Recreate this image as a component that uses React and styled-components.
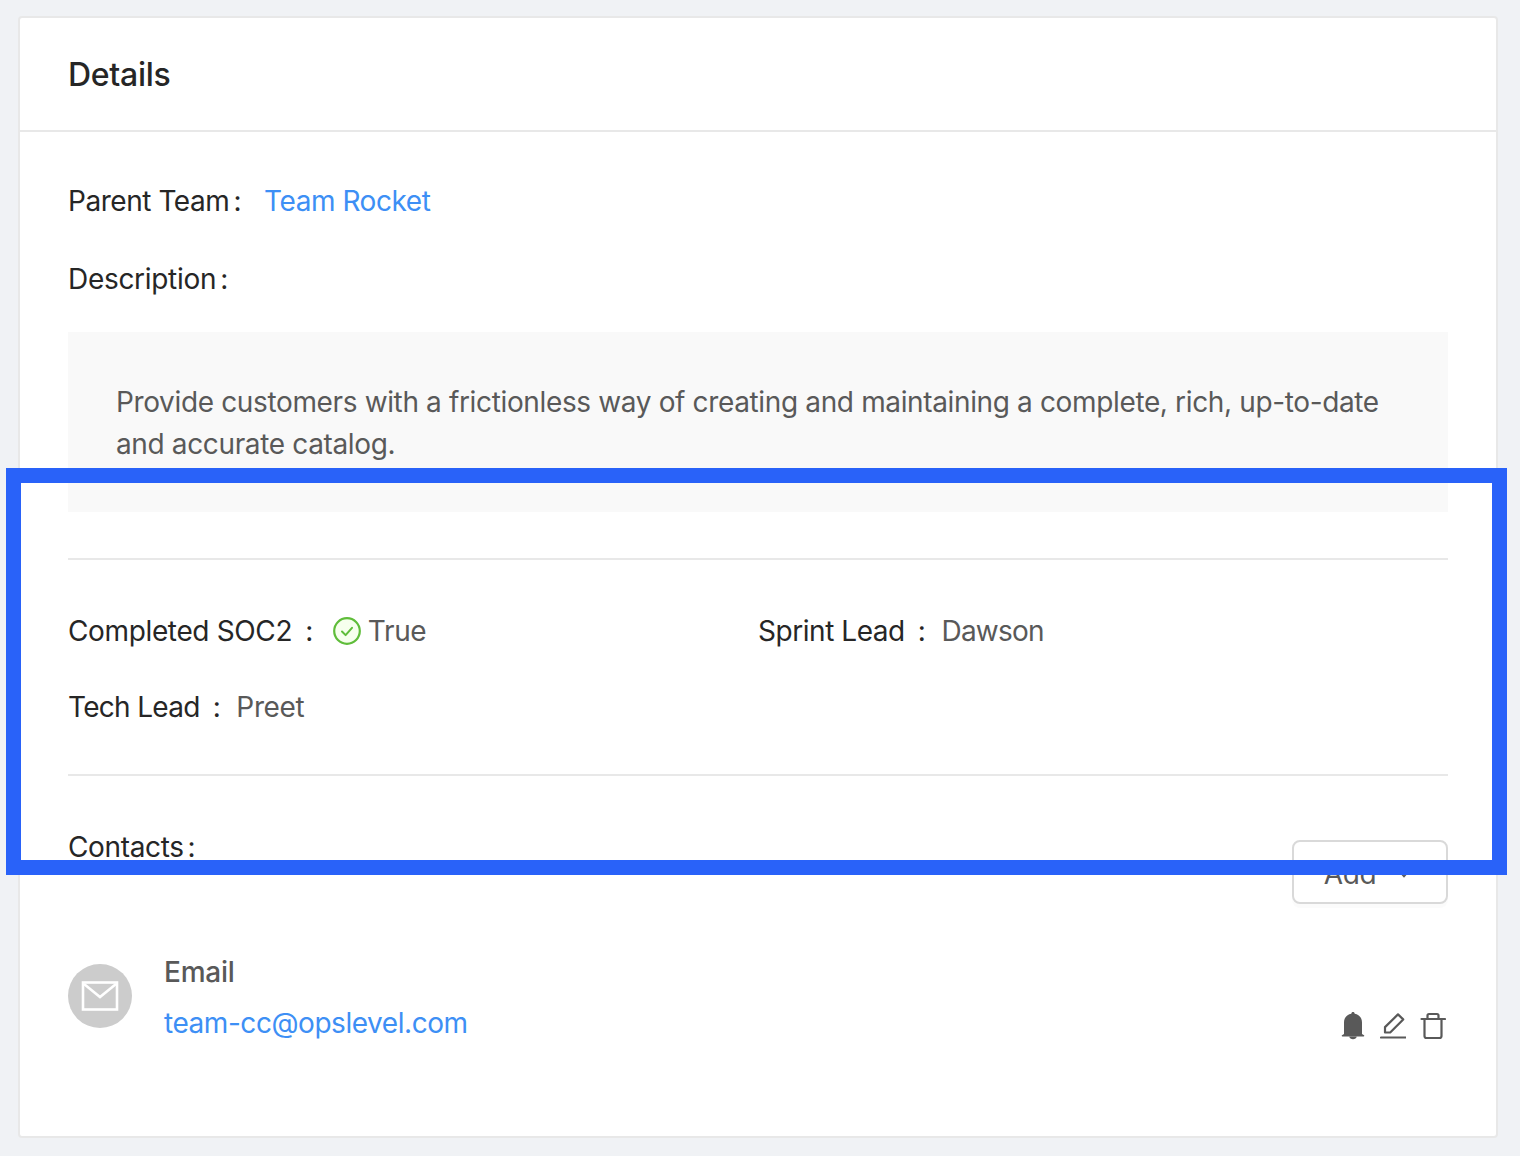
import React from "react";
import styled, { createGlobalStyle } from "styled-components";

const Global = createGlobalStyle`
  html, body { margin: 0; padding: 0; background: #f0f2f5; }
  * { box-sizing: border-box; }
`;

const Page = styled.div`
  position: relative;
  width: 1520px;
  height: 1156px;
  padding: 16px 22px 18px 18px;
  background: #f0f2f5;
  overflow: hidden;
  font-family: Inter, "Liberation Sans", sans-serif;
  font-size: 28px;
  line-height: 44px;
  letter-spacing: -0.36px;
  color: #262626;
`;

const Card = styled.section`
  height: 1122px;
  background: #fff;
  border: 2px solid #e8e8e8;
  border-radius: 4px;
`;

const CardHead = styled.header`
  height: 114px;
  padding: 2px 48px 0;
  display: flex;
  align-items: center;
  border-bottom: 2px solid #e8e8e8;
  font-size: 32px;
  font-weight: 500;
  letter-spacing: -0.3px;
`;

const CardBody = styled.div`
  padding: 47px 48px 0;
`;

const Row = styled.div`
  display: flex;
  align-items: center;
  margin-bottom: ${(p) => p.$mb ?? 34}px;
`;

const Label = styled.span`
  color: #262626;
  letter-spacing: ${(p) => p.$ls ?? -0.36}px;
`;

const Colon = styled.span`
  margin: 0 ${(p) => p.$right ?? 23}px 0 ${(p) => p.$left ?? 4}px;
`;

const LinkText = styled.a`
  color: #3d8ff5;
  letter-spacing: -0.45px;
  text-decoration: none;
`;

const Description = styled.div`
  padding: 49px 48px 47px;
  background: #f9f9f9;
  color: #595959;
  line-height: 42px;
`;

const Divider = styled.hr`
  margin: ${(p) => p.$top}px 0 ${(p) => p.$bottom}px;
  border: 0;
  height: 2px;
  background: #e8e8e8;
`;

const FieldGrid = styled.div`
  display: grid;
  grid-template-columns: 690px 690px;
  row-gap: 32px;
`;

const Field = styled.div`
  display: flex;
  align-items: center;
  height: 44px;
`;

const Value = styled.span`
  color: #595959;
  letter-spacing: ${(p) => p.$ls ?? -0.36}px;
`;

const CheckIcon = styled.svg`
  width: 28px;
  height: 28px;
  margin: 0 7px 0 4px;
  flex: none;
`;

const ContactsHead = styled.div`
  display: flex;
  justify-content: space-between;
  align-items: flex-start;
  height: 79px;
`;

const AddButton = styled.button`
  width: 156px;
  height: 64px;
  margin-top: 15px;
  display: flex;
  align-items: center;
  justify-content: center;
  gap: 22px;
  padding: 4px 6px 0 0;
  background: #fff;
  border: 2px solid #d9d9d9;
  border-radius: 8px;
  box-shadow: 0 4px 0 rgba(0, 0, 0, 0.015);
  color: #595959;
  font: inherit;
  letter-spacing: inherit;
`;

const Chevron = styled.svg`
  width: 12px;
  height: 10px;
`;

const Contact = styled.div`
  display: flex;
  align-items: flex-start;
  margin-top: 46px;
`;

const Avatar = styled.div`
  width: 64px;
  height: 64px;
  margin: 14px 32px 0 0;
  border-radius: 50%;
  background: #cccccc;
  display: flex;
  align-items: center;
  justify-content: center;
  flex: none;
`;

const ContactText = styled.div`
  flex: 1;
  display: flex;
  flex-direction: column;
  gap: 7px;
`;

const ContactType = styled.div`
  color: #595959;
  font-weight: 500;
  letter-spacing: -0.25px;
`;

const Actions = styled.div`
  display: flex;
  align-items: center;
  gap: 14px;
  margin: 62px 2px 0 0;
  color: #595959;
`;

const ActionIcon = styled.svg`
  display: block;
  width: 26px;
  height: 28px;
`;

const Highlight = styled.div`
  position: absolute;
  left: 6px;
  top: 468px;
  width: 1501px;
  height: 407px;
  border: 15px solid #2962f9;
  pointer-events: none;
`;

export default function App() {
  return (
    <Page>
      <Global />
      <Card>
        <CardHead>Details</CardHead>
        <CardBody>
          <Row>
            <Label $ls={-0.45}>Parent Team</Label>
            <Colon>:</Colon>
            <LinkText href="#">Team Rocket</LinkText>
          </Row>
          <Row $mb={31}>
            <Label $ls={-0.3}>Description</Label>
            <Colon>:</Colon>
          </Row>
          <Description>
            Provide customers with a frictionless way of creating and maintaining a complete, rich, up-to-date and
            accurate catalog.
          </Description>
          <Divider $top={46} $bottom={49} />
          <FieldGrid>
            <Field>
              <Label>Completed SOC2</Label>
              <Colon $left={13} $right={16}>:</Colon>
              <CheckIcon viewBox="0 0 28 28" fill="none">
                <circle cx="14" cy="14" r="12.8" fill="#f6ffed" stroke="#5fbd3a" strokeWidth="2.2" />
                <path d="M9 14.5l3.6 3.6L19 10.8" stroke="#5fbd3a" strokeWidth="2" strokeLinecap="round" strokeLinejoin="round" />
              </CheckIcon>
              <Value>True</Value>
            </Field>
            <Field>
              <Label $ls={-0.45}>Sprint Lead</Label>
              <Colon $left={13} $right={16}>:</Colon>
              <Value $ls={-0.8}>Dawson</Value>
            </Field>
            <Field>
              <Label $ls={-0.7}>Tech Lead</Label>
              <Colon $left={13} $right={16}>:</Colon>
              <Value>Preet</Value>
            </Field>
          </FieldGrid>
          <Divider $top={45} $bottom={49} />
          <ContactsHead>
            <div>
              Contacts<Colon $right={0}>:</Colon>
            </div>
            <AddButton>
              Add
              <Chevron viewBox="0 0 12 10" fill="none">
                <path d="M1.5 2.5L6 7.5l4.5-5" stroke="#595959" strokeWidth="1.6" />
              </Chevron>
            </AddButton>
          </ContactsHead>
          <Contact>
            <Avatar>
              <svg width="38" height="32" viewBox="0 0 38 32" fill="none">
                <rect x="2" y="2.5" width="34" height="27" stroke="#fff" strokeWidth="2.6" />
                <path d="M3 4l16 13L35 4" stroke="#fff" strokeWidth="2.6" />
              </svg>
            </Avatar>
            <ContactText>
              <ContactType>Email</ContactType>
              <LinkText href="#">team-cc@opslevel.com</LinkText>
            </ContactText>
            <Actions>
              <ActionIcon viewBox="0 0 26 28">
                <path
                  fill="currentColor"
                  d="M13 0c1 0 1.6.7 1.7 1.7C19.2 2.6 22 6 22 10.5V22l2 1.2c.5.3.3 1.3-.4 1.3H2.4c-.7 0-.9-1-.4-1.3L4 22V10.5C4 6 6.8 2.6 11.3 1.7 11.4.7 12 0 13 0z"
                />
                <path d="M9.3 24.5c.2 1.8 1.8 2.8 3.7 2.8s3.5-1 3.7-2.8z" fill="currentColor" />
              </ActionIcon>
              <ActionIcon viewBox="0 0 26 28" fill="none" stroke="currentColor" strokeWidth="2.2">
                <path d="M5 20.5v-5.4L18 2.4l5.2 5-13 13.1z" strokeLinejoin="round" />
                <path d="M1 25.5h24.5" strokeLinecap="round" />
              </ActionIcon>
              <ActionIcon viewBox="0 0 26 28" fill="none" stroke="currentColor" strokeWidth="2.2">
                <path d="M1.5 7H25" strokeLinecap="round" />
                <path d="M7.5 7V3.5A1.5 1.5 0 0 1 9 2h8a1.5 1.5 0 0 1 1.5 1.5V7" />
                <path d="M4.5 7v17a2 2 0 0 0 2 2h13a2 2 0 0 0 2-2V7" />
              </ActionIcon>
            </Actions>
          </Contact>
        </CardBody>
      </Card>
      <Highlight />
    </Page>
  );
}
